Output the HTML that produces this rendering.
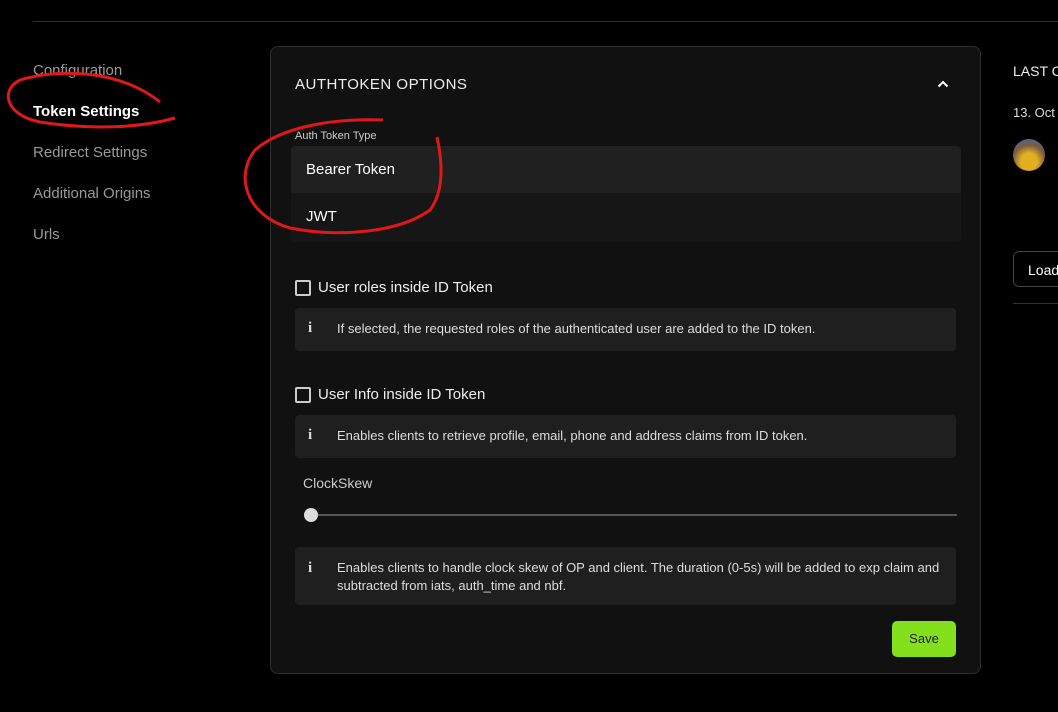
<!DOCTYPE html>
<html><head><meta charset="utf-8"><style>
*{margin:0;padding:0;box-sizing:border-box}
html,body{width:1058px;height:712px;overflow:hidden}
body{background:#000;position:relative;font-family:"Liberation Sans",sans-serif;color:#fff}
.a{position:absolute}
.nav{font-size:15px;color:#9a9a9a}
.panel{left:270px;top:46px;width:711px;height:628px;background:#111;border:1px solid #2e2e2e;border-radius:8px}
.info{position:absolute;left:24px;width:661px;background:#1f1f1f;border-radius:4px;font-size:13px;color:#ddd}
.info i{position:absolute;left:13px;font-style:normal;font-weight:bold;font-family:"Liberation Serif",serif;font-size:15px}
.cb{position:absolute;left:24px;width:16px;height:16px;border:2px solid #ccc;border-radius:2px}
.lbl{position:absolute;left:47px;font-size:15px;color:#eee}
.right{left:1000px;top:0;width:58px;height:712px;overflow:hidden}
</style></head><body>
<div class="a" style="left:33px;top:21px;width:1025px;height:1px;background:#2c2c2c"></div>
<div class="a nav" style="left:33px;top:62px">Configuration</div>
<div class="a" style="left:33px;top:103px;font-size:15px;font-weight:bold;color:#fff">Token Settings</div>
<div class="a nav" style="left:33px;top:144px">Redirect Settings</div>
<div class="a nav" style="left:33px;top:185px">Additional Origins</div>
<div class="a nav" style="left:33px;top:226px">Urls</div>

<div class="a panel">
 <div class="a" style="left:24px;top:29px;font-size:15px;letter-spacing:.5px;color:#eee">AUTHTOKEN OPTIONS</div>
 <svg class="a" style="left:665px;top:32px" width="14" height="10" viewBox="0 0 14 10"><path d="M2.5 7.5 L7 3 L11.5 7.5" stroke="#fff" stroke-width="2" fill="none"/></svg>
 <div class="a" style="left:24px;top:83px;font-size:11px;color:#ccc">Auth Token Type</div>
 <div class="a" style="left:20px;top:99px;width:670px;height:96px;background:#161616;border-radius:4px;overflow:hidden">
  <div style="height:47px;background:#202020;padding:15px 0 0 15px;font-size:15px">Bearer Token</div>
  <div style="padding:15px 0 0 15px;font-size:15px">JWT</div>
 </div>
 <div class="cb" style="top:233px"></div><div class="lbl" style="top:232px">User roles inside ID Token</div>
 <div class="info" style="top:261px;height:43px"><i style="top:12px">i</i><span class="a" style="left:42px;top:13px">If selected, the requested roles of the authenticated user are added to the ID token.</span></div>
 <div class="cb" style="top:340px"></div><div class="lbl" style="top:339px">User Info inside ID Token</div>
 <div class="info" style="top:368px;height:43px"><i style="top:12px">i</i><span class="a" style="left:42px;top:13px">Enables clients to retrieve profile, email, phone and address claims from ID token.</span></div>
 <div class="a" style="left:32px;top:428px;font-size:14px;color:#ccc">ClockSkew</div>
 <div class="a" style="left:36px;top:467px;width:650px;height:2px;background:#555"></div>
 <div class="a" style="left:33px;top:461px;width:14px;height:14px;border-radius:50%;background:#ddd"></div>
 <div class="info" style="top:500px;height:58px"><i style="top:13px">i</i><span class="a" style="left:42px;top:12px;width:610px;line-height:18px">Enables clients to handle clock skew of OP and client. The duration (0-5s) will be added to exp claim and subtracted from iats, auth_time and nbf.</span></div>
 <div class="a" style="left:621px;top:574px;width:64px;height:36px;background:#84e01c;border-radius:5px;color:#222;font-size:13px;text-align:center;line-height:36px">Save</div>
</div>

<div class="a right">
<div class="a" style="left:13px;top:63px;font-size:14px;color:#eee;white-space:nowrap">LAST CHANGED</div>
<div class="a" style="left:13px;top:105px;font-size:13px;color:#ddd;white-space:nowrap">13. Oct 2023</div>
<div class="a" style="left:13px;top:139px;width:32px;height:32px;border-radius:50%;background:radial-gradient(circle at 50% 70%,#e0b020 30%,#7a5a40 60%,#3a6ad0 100%)"></div>
<div class="a" style="left:13px;top:251px;width:80px;height:36px;border:1px solid #444;border-radius:6px;font-size:14px;padding:10px 0 0 14px">Load</div>
<div class="a" style="left:13px;top:303px;width:45px;height:1px;background:#333"></div>
</div>

<svg class="a" style="left:0;top:0" width="1058" height="712">
<path d="M160 102 C120 70 60 68 20 80 C0 90 5 115 40 122 C90 130 140 128 175 118" stroke="#e01818" stroke-width="3" fill="none"/>
<path d="M383 120 C330 118 280 128 255 150 C235 175 245 215 290 228 C340 238 400 232 430 210 C445 190 442 160 437 137" stroke="#e01818" stroke-width="3" fill="none"/>
</svg>
</body></html>
